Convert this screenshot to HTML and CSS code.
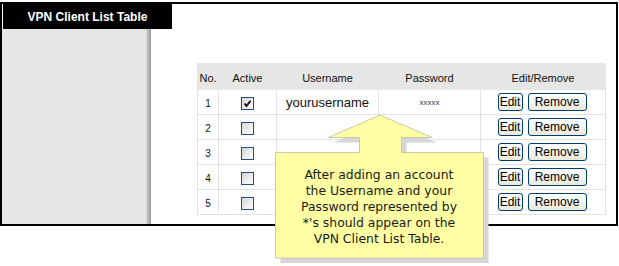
FILE: index.html
```html
<!DOCTYPE html>
<html lang="en">
<head>
    <meta charset="UTF-8">
    <title>VPN Client List Table</title>
    <link rel="stylesheet" href="styles.css">
</head>
<body>
    <div class="frame">
        <div class="title-bar">
            <div class="title">VPN Client List Table</div>
        </div>
        <div class="main">
            <div class="sidebar"></div>
            <div class="sidebar-edge"></div>
            <div class="content">
                <table class="client-table">
                    <colgroup>
                        <col class="col-no">
                        <col class="col-active">
                        <col class="col-user">
                        <col class="col-pass">
                        <col class="col-edit">
                    </colgroup>
                    <thead>
                        <tr>
                            <th>No.</th>
                            <th>Active</th>
                            <th>Username</th>
                            <th>Password</th>
                            <th>Edit/Remove</th>
                        </tr>
                    </thead>
                    <tbody>
                        <tr>
                            <td class="num">1</td>
                            <td><span class="check"><svg width="11" height="11" viewBox="0 0 11 11"><polyline points="2.5,5.5 4.5,8 8.5,2.8" fill="none" stroke="#111" stroke-width="1.9"/></svg></span></td>
                            <td class="user">yourusername</td>
                            <td class="pass">xxxxx</td>
                            <td><div class="actions"><button class="btn btn-edit">Edit</button><button class="btn btn-remove">Remove</button></div></td>
                        </tr>
                        <tr>
                            <td class="num">2</td>
                            <td><span class="check"></span></td>
                            <td></td>
                            <td></td>
                            <td><div class="actions"><button class="btn btn-edit">Edit</button><button class="btn btn-remove">Remove</button></div></td>
                        </tr>
                        <tr>
                            <td class="num">3</td>
                            <td><span class="check"></span></td>
                            <td></td>
                            <td></td>
                            <td><div class="actions"><button class="btn btn-edit">Edit</button><button class="btn btn-remove">Remove</button></div></td>
                        </tr>
                        <tr>
                            <td class="num">4</td>
                            <td><span class="check"></span></td>
                            <td></td>
                            <td></td>
                            <td><div class="actions"><button class="btn btn-edit">Edit</button><button class="btn btn-remove">Remove</button></div></td>
                        </tr>
                        <tr>
                            <td class="num">5</td>
                            <td><span class="check"></span></td>
                            <td></td>
                            <td></td>
                            <td><div class="actions"><button class="btn btn-edit">Edit</button><button class="btn btn-remove">Remove</button></div></td>
                        </tr>
                    </tbody>
                </table>
            </div>
        </div>
    </div>

    <!-- callout over the table -->
    <div class="callout">
        <svg class="callout-shape" width="225" height="160" viewBox="0 0 225 160">
            <path d="M5.5 42.5 H89.5 V27.5 H58.5 L110 5 L162 27.5 H131.5 V42.5 H213.5 V148 H5.5 Z" fill="#d6d6d6" transform="translate(5,5)"/>
            <path d="M5.5 42.5 H89.5 V27.5 H58.5 L110 5 L162 27.5 H131.5 V42.5 H213.5 V148 H5.5 Z" fill="#ffffa3" stroke="#c9c9a6" stroke-width="1"/>
        </svg>
        <div class="callout-text">
            After adding an account<br>
            the Username and your<br>
            Password represented by<br>
            *'s should appear on the<br>
            VPN Client List Table.
        </div>
    </div>
</body>
</html>
```

FILE: styles.css
```css
body {
    margin: 0;
    padding-top: 2px;
    background-color: rgb(255, 255, 255);
    font-family: "Liberation Sans", Arial, sans-serif;
}
.frame {
    width: 618px;
    height: 224px;
    box-sizing: border-box;
    border: 2px solid rgb(0, 0, 0);
    display: flex;
    flex-direction: column;
}
.title-bar {
    height: 25px;
    padding-left: 1px;
}
.title {
    width: 169px;
    height: 25px;
    background-color: rgb(0, 0, 0);
    color: rgb(255, 255, 255);
    font-size: 12px;
    font-weight: bold;
    display: flex;
    align-items: center;
    justify-content: center;
}
.main {
    flex: 1;
    display: flex;
}
.sidebar {
    width: 145px;
    background-color: rgb(230, 230, 230);
}
.sidebar-edge {
    width: 5px;
    background: linear-gradient(to right, rgb(214, 214, 214), rgb(150, 150, 150));
}
.content {
    flex: 1;
    padding: 34px 10px 0 46px;
}
.client-table {
    width: 408px;
    border-collapse: collapse;
    table-layout: fixed;
    color: rgb(17, 17, 17);
}
.col-no { width: 21px; }
.col-active { width: 58px; }
.col-user { width: 102px; }
.col-pass { width: 102px; }
.col-edit { width: 125px; }
.client-table th {
    height: 26px;
    padding: 3px 0 0;
    box-sizing: border-box;
    background-color: rgb(230, 230, 230);
    border: 1px solid rgb(230, 230, 230);
    font-size: 11px;
    font-weight: normal;
    text-align: center;
}
.client-table td {
    height: 25px;
    padding: 0;
    box-sizing: border-box;
    border: 1px solid rgb(226, 226, 226);
    text-align: center;
    vertical-align: middle;
}
.client-table .num {
    font-size: 10px;
    padding-top: 2px;
}
.client-table .user {
    font-size: 13px;
}
.client-table .pass {
    font-size: 8px;
    color: rgb(60, 60, 60);
}
.check {
    display: inline-block;
    width: 13px;
    height: 13px;
    box-sizing: border-box;
    border: 1px solid rgb(28, 81, 128);
    background: linear-gradient(135deg, rgb(214, 214, 208), rgb(255, 255, 255));
    vertical-align: middle;
    margin-top: 1px;
}
.check svg {
    display: block;
}
.actions {
    display: flex;
    justify-content: center;
    gap: 5px;
    padding-right: 2px;
}
.btn {
    height: 18px;
    padding: 0;
    border: 1px solid rgb(0, 60, 116);
    border-radius: 3px;
    background: linear-gradient(rgb(255, 255, 255), rgb(236, 233, 216));
    font-family: "Liberation Sans", Arial, sans-serif;
    font-size: 12px;
    color: rgb(0, 0, 0);
}
.btn-edit {
    width: 25px;
}
.btn-remove {
    width: 59px;
}
.callout {
    position: absolute;
    left: 270px;
    top: 110px;
    width: 225px;
    height: 160px;
}
.callout-shape {
    position: absolute;
    left: 0;
    top: 0;
}
.callout-text {
    position: relative;
    margin: 57px 0 0 5px;
    width: 208px;
    font-family: "DejaVu Sans", Verdana, sans-serif;
    font-size: 12.4px;
    line-height: 16px;
    text-align: center;
    color: rgb(26, 26, 26);
}
```
